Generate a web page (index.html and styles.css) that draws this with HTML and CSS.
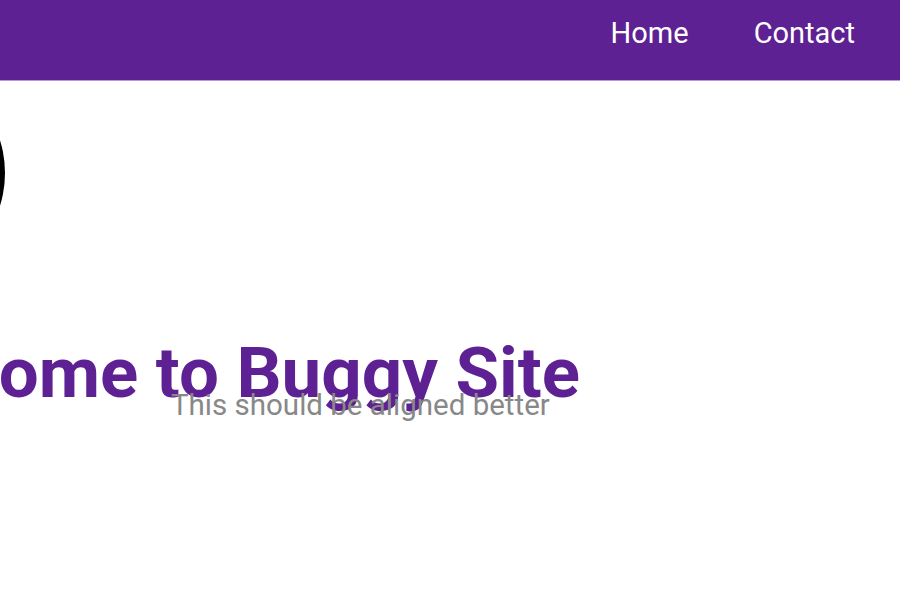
FILE: index.html
```html
<!DOCTYPE html>
<html lang="en">
<head>
    <meta charset="UTF-8" />
    <meta name="viewport" content="width=device-width, initial-scale=1.0" />
    <title>Buggy Site</title>
    <link rel="stylesheet" href="styles.css">
</head>
<body>
    <header class="site-header">
        <nav class="nav">
            <a class="nav-link" href="#">Home</a>
            <a class="nav-link" href="#">Contact</a>
        </nav>
    </header>

    <main class="hero">
        <div class="logo"></div>
        <h1 class="hero-title">Welcome to Buggy Site</h1>
        <p class="hero-sub">This should be aligned better</p>
    </main>
</body>
</html>
```

FILE: styles.css
```css
/* Page basics */
body {
    margin: 0;
    font-family: Roboto, "Liberation Sans", sans-serif;
    background: #fff;
    overflow: hidden;
}

/* Purple top bar */
.site-header {
    position: relative;
    z-index: 1;
    height: 80px;
    background-color: #5e2193;
    border-bottom: 1px solid #b798d4;
}

.nav {
    display: flex;
    justify-content: flex-end;
    gap: 65px;
    padding: 16px 45px 0 0;
}

.nav-link {
    color: #fff;
    font-size: 29px;
    line-height: 34px;
    text-decoration: none;
}

/* Hero area (intentionally off) */
.hero {
    display: flex;
    flex-direction: column;
    align-items: flex-start;
}

.logo {
    width: 220px;
    height: 220px;
    margin: -18px 0 0 -215px;
    border-radius: 50%;
    background-color: #000;
}

.hero-title {
    margin: 50px 0 0 -156px;
    font-size: 70.8px;
    line-height: 80px;
    font-weight: 700;
    color: #5e2193;
    white-space: nowrap;
}

.hero-sub {
    margin: -25px 0 0 171px;
    font-size: 29.5px;
    line-height: 34px;
    color: #888;
}
```
